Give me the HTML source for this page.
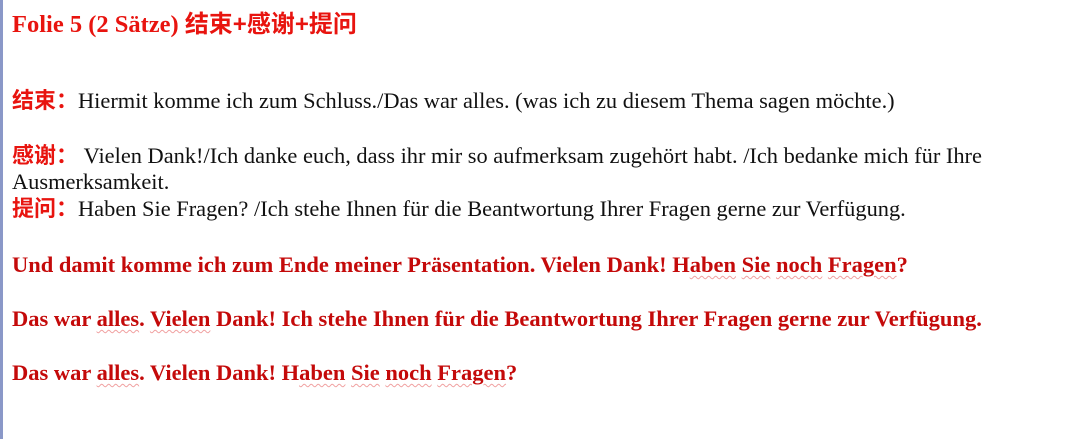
<!DOCTYPE html>
<html><head><meta charset="utf-8"><style>
html,body{margin:0;padding:0;background:#fff;width:1081px;height:439px;overflow:hidden;position:relative}
.bar{position:absolute;left:0;top:0;width:3px;height:439px;background:#8a98c8}
.l{position:absolute;left:12px;white-space:nowrap;font-family:"Liberation Serif","Times New Roman","DejaVu Serif",serif;font-size:22.4px;color:#111;line-height:1}
.cj{font-family:"Liberation Sans","Noto Sans CJK SC",sans-serif;font-weight:bold;color:#e8140f;font-size:22px}
.t{color:#e8140f;font-weight:bold;font-size:24.5px}
.t .cj{font-size:24px}
.r{color:#c40a0a;font-weight:bold;font-size:22.5px}
u{text-decoration:underline wavy #f0a0a0 1px;text-underline-offset:3px}
</style></head><body>
<div class="bar"></div>
<div class="l t" style="top:13px">Folie 5 (2 Sätze) <span class="cj">结束+感谢+提问</span></div>
<div class="l" style="top:90px"><span class="cj">结束：</span>Hiermit komme ich zum Schluss./Das war alles. (was ich zu diesem Thema sagen möchte.)</div>
<div class="l" style="top:145px"><span class="cj">感谢：</span> Vielen Dank!/Ich danke euch, dass ihr mir so aufmerksam zugehört habt. /Ich bedanke mich für Ihre</div>
<div class="l" style="top:171px">Ausmerksamkeit.</div>
<div class="l" style="top:198px"><span class="cj">提问：</span>Haben Sie Fragen? /Ich stehe Ihnen für die Beantwortung Ihrer Fragen gerne zur Verfügung.</div>
<div class="l r" style="top:254px">Und damit komme ich zum Ende meiner Präsentation. Vielen Dank! H<u>aben</u> <u>Sie</u> <u>noch</u> <u>Fragen</u>?</div>
<div class="l r" style="top:308px">Das war <u>alles</u>. <u>Vielen</u> Dank! Ich stehe Ihnen für die Beantwortung Ihrer Fragen gerne zur Verfügung.</div>
<div class="l r" style="top:362px">Das war <u>alles</u>. Vielen Dank! H<u>aben</u> <u>Sie</u> <u>noch</u> <u>Fragen</u>?</div>
</body></html>
